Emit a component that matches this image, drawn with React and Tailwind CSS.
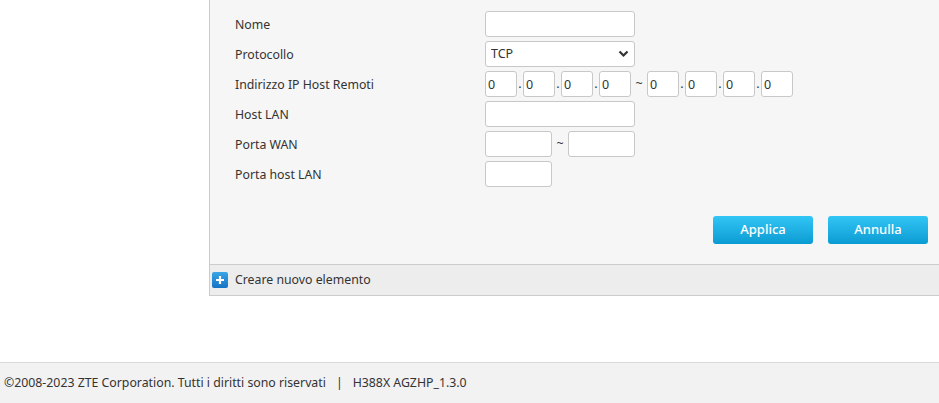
import React from 'react'

const font = { fontFamily: '"Noto Sans", "Liberation Sans", sans-serif' }

function Field({ className = '', value = '' }) {
    return (
        <input
            readOnly
            value={value}
            className={`h-[26px] rounded-[3px] border border-[#c8c8c8] bg-white px-[2px] text-[12.5px] text-[#333] outline-none ${className}`}
        />
    )
}

function IpGroup() {
    return (
        <div className="flex items-center">
            {[0, 1, 2, 3].map((i) => (
                <React.Fragment key={i}>
                    {i > 0 && <span className="w-[6px] text-center text-[12.5px] text-[#333]">.</span>}
                    <Field className="w-[32px]" value="0" />
                </React.Fragment>
            ))}
        </div>
    )
}

function Row({ label, children }) {
    return (
        <div className="flex h-[30px] items-center">
            <div className="w-[275px] pl-[25px] pt-[2px] text-[12.3px] text-[#333]">{label}</div>
            <div className="flex items-center">{children}</div>
        </div>
    )
}

export default function App() {
    return (
        <div className="flex h-[403px] w-[939px] flex-col bg-white" style={font}>
            <div className="flex h-[296px]">
                <div className="w-[209px] shrink-0" />
                <div className="flex flex-1 flex-col border-l border-[#cccccc]">
                    <div className="flex flex-1 flex-col bg-[#f6f6f6] pt-[9px]">
                        <Row label="Nome">
                            <Field className="w-[150px]" />
                        </Row>
                        <Row label="Protocollo">
                            <div className="flex h-[26px] w-[150px] items-center justify-between rounded-[3px] border border-[#c8c8c8] bg-white pl-[5px] pr-[5px] text-[12.5px] text-[#333]">
                                <span>TCP</span>
                                <svg width="11" height="8" viewBox="0 0 11 8">
                                    <path d="M1.5 1.5 L5.5 5.5 L9.5 1.5" fill="none" stroke="#333" strokeWidth="2.2" />
                                </svg>
                            </div>
                        </Row>
                        <Row label="Indirizzo IP Host Remoti">
                            <IpGroup />
                            <span className="w-[16px] text-center text-[12.5px] text-[#333]">~</span>
                            <IpGroup />
                        </Row>
                        <Row label="Host LAN">
                            <Field className="w-[150px]" />
                        </Row>
                        <Row label="Porta WAN">
                            <Field className="w-[67px]" />
                            <span className="w-[16px] text-center text-[12.5px] text-[#333]">~</span>
                            <Field className="w-[67px]" />
                        </Row>
                        <Row label="Porta host LAN">
                            <Field className="w-[67px]" />
                        </Row>
                        <div className="mt-[27px] flex justify-end gap-[15px] pr-[11px]">
                            <button className="h-[28px] w-[100px] rounded-[3px] bg-gradient-to-b from-[#31c6f6] to-[#079bd2] text-[13px] font-medium text-white">
                                Applica
                            </button>
                            <button className="h-[28px] w-[100px] rounded-[3px] bg-gradient-to-b from-[#31c6f6] to-[#079bd2] text-[13px] font-medium text-white">
                                Annulla
                            </button>
                        </div>
                    </div>
                    <div className="flex h-[32px] items-center gap-[7px] border-y border-[#cccccc] bg-[#ededed] pl-[2px]">
                        <span className="flex h-[16px] w-[16px] items-center justify-center rounded-[2px] bg-gradient-to-b from-[#3aa6e6] to-[#1673c4]">
                            <svg width="10" height="10" viewBox="0 0 10 10">
                                <path d="M5 1 V9 M1 5 H9" stroke="#fff" strokeWidth="2.2" />
                            </svg>
                        </span>
                        <span className="text-[12.3px] text-[#333]">Creare nuovo elemento</span>
                    </div>
                </div>
            </div>
            <div className="flex-1" />
            <div className="flex h-[41px] items-center border-t border-[#d9d9d9] bg-[#f2f2f2] pl-[4px] text-[12.3px] text-[#333]">
                <span>©2008-2023 ZTE Corporation. Tutti i diritti sono riservati</span>
                <span className="mx-[10px]">|</span>
                <span>H388X AGZHP_1.3.0</span>
            </div>
        </div>
    )
}
